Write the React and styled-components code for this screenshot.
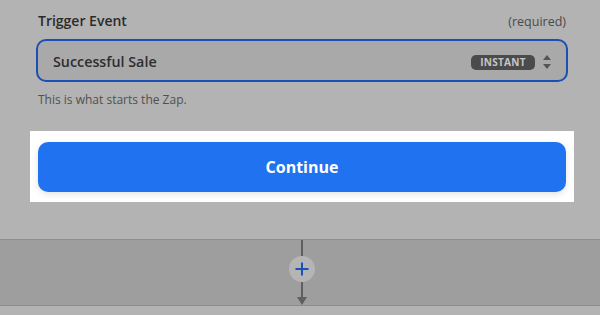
import React from 'react'
import styled, { createGlobalStyle } from 'styled-components';

const GlobalStyle = createGlobalStyle`
  html, body {
    margin: 0;
    padding: 0;
    background: #b2b2b2;
    font-family: "Open Sans", "Noto Sans", sans-serif;
  }
`;

const App = () => {
    return (
        <>
            <GlobalStyle />
            <Page>
                <Card>
                    <LabelRow>
                        <Label>Trigger Event</Label>
                        <Required>(required)</Required>
                    </LabelRow>
                    <SelectBox>
                        <SelectValue>Successful Sale</SelectValue>
                        <Badge>INSTANT</Badge>
                        <Chevrons viewBox="0 0 10 16" width="10" height="16">
                            <path d="M5 1 L9 6 L1 6 Z" fill="#555" />
                            <path d="M5 15 L9 10 L1 10 Z" fill="#555" />
                        </Chevrons>
                    </SelectBox>
                    <Hint>This is what starts the Zap.</Hint>
                    <Highlight>
                        <ContinueButton>Continue</ContinueButton>
                    </Highlight>
                </Card>
                <Canvas>
                    <Connector>
                        <Line $h={16} />
                        <PlusCircle>
                            <svg viewBox="0 0 26 26" width="26" height="26">
                                <path d="M13 6.5 V19.5 M6.5 13 H19.5" stroke="#1d4fb8" strokeWidth="2" />
                            </svg>
                        </PlusCircle>
                        <Line $h={15} />
                        <ArrowHead />
                    </Connector>
                </Canvas>
                <Below />
            </Page>
        </>
    )
}

const Page = styled.div`
    width: 600px;
    height: 315px;
    overflow: hidden;
    display: flex;
    flex-direction: column;
`;

const Card = styled.div`
    height: 240px;
    box-sizing: border-box;
    padding: 11px 32px 0 36px;
    background: #b3b3b3;
    border-bottom: 1px solid #8f8f8f;
    display: flex;
    flex-direction: column;
`;

const LabelRow = styled.div`
    display: flex;
    justify-content: space-between;
    align-items: baseline;
    padding: 0 2px;
    height: 20px;
`;

const Label = styled.span`
    font-size: 14px;
    font-weight: 600;
    color: #2b2b2b;
`;

const Required = styled.span`
    font-size: 12.5px;
    color: #4a4a4a;
`;

const SelectBox = styled.div`
    margin-top: 8px;
    height: 43px;
    box-sizing: border-box;
    border: 2px solid #1a4fb5;
    border-radius: 10px;
    background: #a9a9a9;
    display: flex;
    align-items: center;
    padding: 0 14px 0 15px;
`;

const SelectValue = styled.span`
    flex: 1;
    font-size: 14.3px;
    font-weight: 600;
    color: #2e2e2e;
    margin-top: 2px;
`;

const Badge = styled.span`
    background: #4b4b4b;
    color: #c6c6c6;
    font-size: 10px;
    font-weight: 700;
    letter-spacing: 0.3px;
    height: 15px;
    line-height: 15px;
    width: 64px;
    text-align: center;
    border-radius: 5px;
    margin-right: 7px;
    margin-top: 3px;
`;

const Chevrons = styled.svg`
    display: block;
    margin-top: 2px;
`;

const Hint = styled.div`
    margin-top: 9px;
    padding-left: 2px;
    font-size: 12px;
    color: #505050;
`;

const Highlight = styled.div`
    margin: 23px -6px 0 -6px;
    background: #ffffff;
    padding: 11px 8px 10px 8px;
`;

const ContinueButton = styled.button`
    display: block;
    width: 100%;
    height: 50px;
    border: none;
    border-radius: 10px;
    background: #2172f0;
    color: #ffffff;
    font-family: "Open Sans", "Noto Sans", sans-serif;
    font-size: 16px;
    font-weight: 700;
    box-shadow: 0 2px 6px rgba(0, 0, 0, 0.12);
`;

const Canvas = styled.div`
    height: 65px;
    background: #9e9e9e;
    border-bottom: 1px solid #8c8c8c;
    display: flex;
    justify-content: center;
`;

const Connector = styled.div`
    display: flex;
    flex-direction: column;
    align-items: center;
    margin-left: 4px;
`;

const Line = styled.div`
    width: 2px;
    height: ${p => p.$h}px;
    background: #5f5f5f;
`;

const PlusCircle = styled.div`
    width: 26px;
    height: 26px;
    border-radius: 50%;
    background: #b5b5b5;
    display: flex;
    align-items: center;
    justify-content: center;
`;

const ArrowHead = styled.div`
    width: 0;
    height: 0;
    border-left: 5px solid transparent;
    border-right: 5px solid transparent;
    border-top: 8px solid #5f5f5f;
`;

const Below = styled.div`
    flex: 1;
    background: #b3b3b3;
`;

export default App
